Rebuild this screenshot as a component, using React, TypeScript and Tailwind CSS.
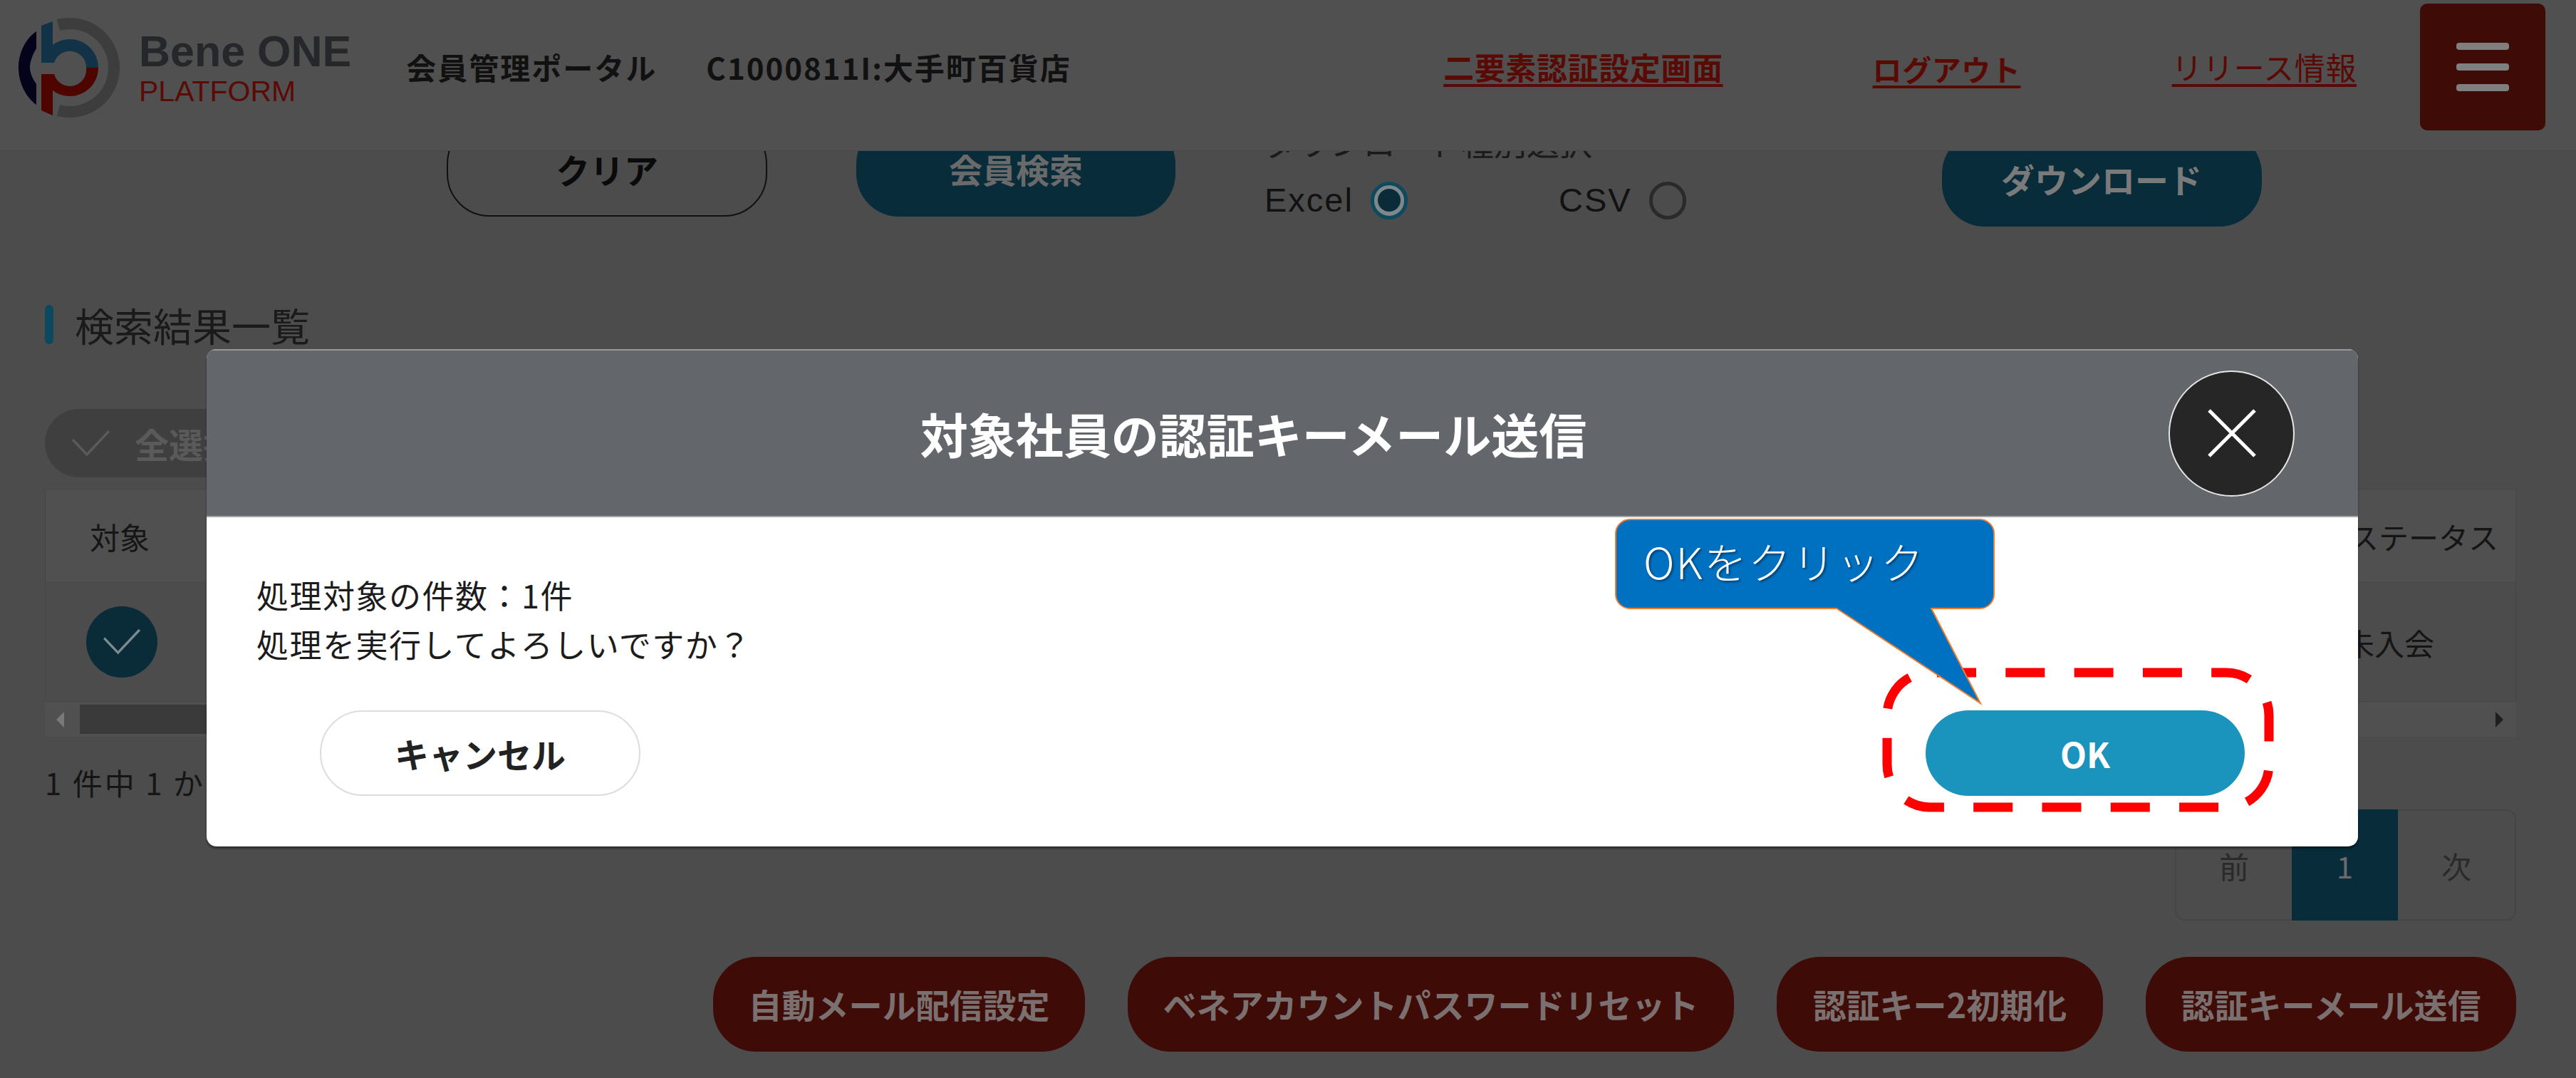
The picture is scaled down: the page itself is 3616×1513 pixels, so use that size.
import React from "react";

function Logo() {
  return (
    <svg width="150" height="150" viewBox="20 20 150 150" className="shrink-0">
      <path d="M82 35.1A62 62 0 1 1 82 154.9" fill="none" stroke="#3d3d3d" strokeWidth="16" />
      <path d="M51 44C35 55 26 75 26 95C26 115 35 135 51 147L51 118C44 108 42 100 42 95C42 88 44 80 51 68Z" fill="#05031c" />
      <path d="M58 36L74 30V63A40 40 0 0 1 138 95H121A23 23 0 0 0 76 88H58Z" fill="#123248" />
      <path d="M58 104H76A23 23 0 0 0 121 95H138A40 40 0 0 1 74 127V162L58 155Z" fill="#4e0500" />
    </svg>
  );
}

function Check({ className }: { className: string }) {
  return (
    <svg viewBox="0 0 53 37" className={className} fill="none" stroke="currentColor" strokeWidth="3.5">
      <path d="M1 13L21 34L52 1" />
    </svg>
  );
}

function Radio({ on }: { on?: boolean }) {
  return (
    <span className={`flex h-[53px] w-[52px] items-center justify-center rounded-full border-[5px] ${on ? "border-[#0e4a5e] bg-[#7f878a]" : "border-[#2a2a2a]"}`}>
      {on && <span className="h-[32px] w-[32px] rounded-full bg-[#0a2b38]" />}
    </span>
  );
}

const actions = [
  { label: "自動メール配信設定", w: "w-[522px]" },
  { label: "ベネアカウントパスワードリセット", w: "w-[851px]" },
  { label: "認証キー2初期化", w: "w-[458px]" },
  { label: "認証キーメール送信", w: "w-[520px]" },
];

export default function App() {
  return (
    <div className="relative h-[1513px] w-[3616px] overflow-hidden bg-[#4c4c4c] font-['Noto_Sans_CJK_JP','Noto_Sans',sans-serif] text-[#151515]">
      <header className="relative z-10 flex h-[212px] border-b border-[#484848] bg-[#505050]">
        <div className="ml-[20px] flex h-[190px] items-center">
          <Logo />
          <div className="ml-[25px] flex flex-col font-['Liberation_Sans',sans-serif]">
            <span className="h-[62px] text-[61px] font-bold leading-[62px] text-[#25272a]">Bene ONE</span>
            <span className="mt-[3px] text-[41px] leading-[44px] text-[#5c0a05]">PLATFORM</span>
          </div>
        </div>
        <div className="ml-[77px] mt-[64px] flex h-[60px] items-center gap-[69px] text-[42px] font-bold leading-[60px] tracking-[2px] text-[#111]">
          <span>会員管理ポータル</span>
          <span>C1000811I:大手町百貨店</span>
        </div>
        <nav className="ml-auto flex h-[190px] items-start text-[#5a0a05]">
          <a className="mt-[63px] text-[43px] font-bold leading-[60px] tracking-[0.6px] underline decoration-[4px] underline-offset-[6px]">二要素認証設定画面</a>
          <a className="ml-[210px] mt-[66px] text-[41px] font-bold leading-[60px] tracking-[0.6px] underline decoration-[4px] underline-offset-[6px]">ログアウト</a>
          <a className="ml-[212px] mt-[63px] text-[43px] leading-[60px] tracking-[0.6px] underline decoration-[4px] underline-offset-[6px]">リリース情報</a>
        </nav>
        <button className="ml-[89px] mr-[43px] mt-[5px] flex h-[178px] w-[176px] flex-col items-center justify-center gap-[19px] rounded-[10px] bg-[#3f0b07]">
          <span className="h-[10px] w-[74px] rounded-[4px] bg-[#7f7f7f]" />
          <span className="h-[10px] w-[74px] rounded-[4px] bg-[#7f7f7f]" />
          <span className="h-[10px] w-[74px] rounded-[4px] bg-[#7f7f7f]" />
        </button>
      </header>

      <main className="-mt-[42px] flex flex-col pl-[63px] pr-[84px]">
        <div className="flex h-[148px] items-start">
          <button className="ml-[564px] flex h-[134px] w-[450px] items-center justify-center rounded-[60px] border-2 border-[#111] text-[48px] font-bold text-[#0a0a0a]">クリア</button>
          <button className="ml-[125px] flex h-[134px] w-[448px] items-center justify-center rounded-[60px] bg-[#082c3a] text-[47px] font-bold text-[#6a6a6a]">会員検索</button>
          <div className="ml-[125px] flex flex-col">
            <span className="text-[46px] leading-[56px] text-[#1a1a1a]">ダウンロード種別選択</span>
            <div className="mt-[25px] flex items-center font-['Liberation_Sans',sans-serif] text-[47px] leading-[60px] tracking-[2px] text-[#111]">
              <span>Excel</span>
              <span className="ml-[24px]"><Radio on /></span>
              <span className="ml-[212px]">CSV</span>
              <span className="ml-[24px]"><Radio /></span>
            </div>
          </div>
          <button className="ml-[359px] mt-[14px] flex h-[134px] w-[449px] items-center justify-center rounded-[60px] bg-[#082c3a] text-[47px] font-bold text-[#7a7a7a]">ダウンロード</button>
        </div>

        <div className="mt-[110px] flex h-[55px] items-center">
          <span className="h-[55px] w-[12px] rounded-full bg-[#0b4a5e]" />
          <h2 className="ml-[30px] text-[55px] font-normal leading-[55px] text-[#1a1a1a]">検索結果一覧</h2>
        </div>

        <div className="mt-[91px] flex h-[96px] w-[420px] items-center rounded-full bg-[#3f3f3f] pl-[38px] text-[48px] font-bold text-[#5a5a5a]">
          <Check className="h-[37px] w-[53px] text-[#5a5a5a]" />
          <span className="ml-[35px]">全選択</span>
        </div>

        <div className="mt-[16px] flex flex-col text-[42px]">
          <div className="flex h-[132px] items-center justify-between border border-[#454545] bg-[#505050] pl-[62px]">
            <span>対象</span>
            <span className="mr-[24px]">ステータス</span>
          </div>
          <div className="flex h-[167px] items-center justify-between border-x border-b border-[#454545] pl-[57px]">
            <span className="flex h-[100px] w-[100px] items-center justify-center rounded-full bg-[#0a2b38]">
              <Check className="h-[36px] w-[52px] text-[#7f8b90]" />
            </span>
            <span className="mr-[114px]">未入会</span>
          </div>
          <div className="flex h-[49px] items-center bg-[#505050]">
            <span className="ml-[16px] h-0 w-0 border-y-[11px] border-r-[11px] border-y-transparent border-r-[#7a7a7a]" />
            <span className="ml-[22px] h-[41px] w-[1000px] bg-[#3a3a3a]" />
            <span className="ml-auto mr-[18px] h-0 w-0 border-y-[11px] border-l-[11px] border-y-transparent border-l-[#1f1f1f]" />
          </div>
        </div>

        <p className="mt-[34px] text-[42px] leading-[60px] tracking-[3px] text-[#151515]">1 件中 1 から 1 まで表示</p>

        <div className="mt-[8px] flex justify-end">
          <div className="flex h-[156px] w-[479px] rounded-[14px] border-2 border-[#454545] text-[42px]">
            <span className="flex w-[162px] items-center justify-center text-[#2a2a2a]">前</span>
            <span className="-my-[2px] flex w-[149px] items-center justify-center bg-[#082c3a] text-[#6a6a6a]">1</span>
            <span className="flex flex-1 items-center justify-center text-[#2a2a2a]">次</span>
          </div>
        </div>

        <div className="mt-[51px] flex justify-end gap-[60px]">
          {actions.map((a) => (
            <button key={a.label} className={`flex h-[133px] items-center justify-center rounded-[60px] bg-[#3f0b07] text-[47px] font-bold text-[#7a7070] ${a.w}`}>
              {a.label}
            </button>
          ))}
        </div>
      </main>

      <section className="absolute left-[290px] top-[490px] z-20 flex h-[698px] w-[3020px] flex-col overflow-hidden rounded-[14px] bg-white shadow-[0_3px_3px_rgba(0,0,0,0.4)]">
        <div className="flex h-[236px] items-center border-y-2 border-t-[#999] border-b-[#a5a5a5] bg-[#63666b] pr-[89px]">
          <h1 className="flex-1 pl-[185px] text-center text-[67px] font-bold text-white">対象社員の認証キーメール送信</h1>
          <button className="flex h-[177px] w-[177px] items-center justify-center rounded-full border-2 border-[#e5e5e5] bg-[#262626]">
            <svg width="68" height="68" viewBox="0 0 68 68" stroke="#fff" strokeWidth="5" fill="none">
              <path d="M2 2L66 66M66 2L2 66" />
            </svg>
          </button>
        </div>
        <div className="flex flex-1 flex-col px-[70px] pt-[74px] text-[#1c1c1c]">
          <p className="text-[45px] leading-[69px] tracking-[1.5px]">処理対象の件数：1件<br />処理を実行してよろしいですか？</p>
          <div className="mt-[59px] flex justify-between px-[89px]">
            <button className="flex h-[120px] w-[450px] items-center justify-center rounded-full border-2 border-[#dddddd] text-[48px] font-bold text-[#222]">キャンセル</button>
            <button className="flex h-[120px] w-[448px] items-center justify-center rounded-full bg-[#1a94bc] text-[48px] font-bold text-white">OK</button>
          </div>
        </div>
      </section>

      <svg className="absolute left-[2630px] top-[925px] z-30" width="575" height="230" viewBox="2630 925 575 230" fill="none">
        <rect x="2649" y="944" width="536" height="189" rx="60" stroke="#ff0000" strokeWidth="13" strokeDasharray="55 41.3" strokeDashoffset="-10" />
      </svg>

      <div className="absolute left-[2266px] top-[727px] z-40 h-[265px] w-[536px]">
        <svg className="absolute inset-0" width="536" height="265" viewBox="2266 727 536 265">
          <path d="M2288 729H2779A20 20 0 0 1 2799 749V834A20 20 0 0 1 2779 854H2711L2780 987L2578 854H2288A20 20 0 0 1 2268 834V749A20 20 0 0 1 2288 729Z" fill="#0070c0" stroke="#ed7d31" strokeWidth="2" />
        </svg>
        <span className="absolute left-[41px] top-[15px] text-[60px] font-light leading-[90px] tracking-[2px] text-white [text-shadow:2px_2px_3px_rgba(0,0,0,0.45)]">OKをクリック</span>
      </div>
    </div>
  );
}
